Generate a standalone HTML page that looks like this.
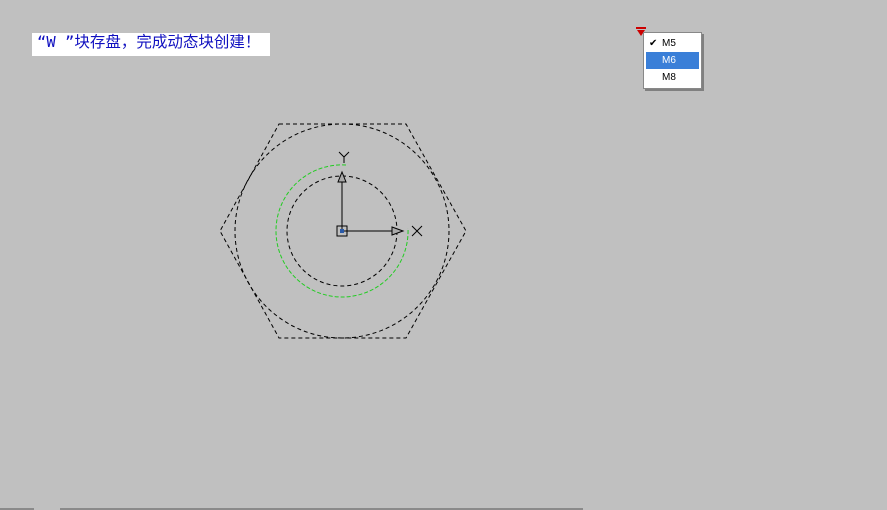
<!DOCTYPE html>
<html><head><meta charset="utf-8"><style>
body{margin:0;width:887px;height:510px;background:#c0c0c0;position:relative;overflow:hidden;font-family:"Liberation Sans","Noto Sans CJK SC",sans-serif}
.msg{position:absolute;left:32px;top:33px;width:238px;height:23px;background:#fff;color:#1010c0;font-size:15.5px;line-height:19px;padding-left:5px;box-sizing:border-box;font-family:"WenQuanYi Zen Hei",monospace}
.menu{position:absolute;left:643px;top:32px;width:57px;height:55px;background:#fff;border:1px solid #888;box-shadow:2px 2px 0 #808080;font-size:10px}
.menu div{height:17px;line-height:17px;padding-left:16px;margin:0 2px;position:relative}
.sel{background:#3a7fd8;color:#fff}
</style></head><body>
<div class="msg">“W ”块存盘，完成动态块创建！</div>
<svg style="position:absolute;left:636px;top:27px" width="12" height="10"><rect x="0" y="0" width="10" height="2" fill="#c00"/><polygon points="1,3 9,3 5,9" fill="#c00"/></svg>
<div class="menu"><div style="margin-top:2px"><span style="position:absolute;left:3px;font-size:10px">✔</span>M5</div><div class="sel">M6</div><div>M8</div></div>
<svg style="position:absolute;left:0;top:0" width="887" height="510">
<g fill="none" stroke="#000" stroke-width="1" stroke-dasharray="4,3">
<polygon points="279,124 406,124 466,231 406,338 279,338 220,231"/>
<circle cx="342" cy="231" r="107"/>
<circle cx="342" cy="231" r="55"/>
</g>
<path d="M346,165 A66,66 0 0 0 276,231 A66,66 0 0 0 342,297 A66,66 0 0 0 408,228" fill="none" stroke="#22cc22" stroke-dasharray="4,2"/>
<line x1="342" y1="231" x2="342" y2="182" stroke="#000"/>
<polygon points="342,172 338,182 346,182" fill="#aaa" stroke="#000"/>
<line x1="342" y1="231" x2="392" y2="231" stroke="#000"/>
<polygon points="403,231 392,227 392,235" fill="#aaa" stroke="#000"/>
<rect x="337" y="226" width="10" height="10" fill="none" stroke="#000"/>
<rect x="340" y="229" width="4" height="4" fill="#2a5aa8"/>
<path d="M339,152 L344,157 L349,152 M344,157 L344,163" stroke="#000" fill="none"/>
<path d="M412,226 L422,236 M422,226 L412,236" stroke="#000" fill="none"/>
<line x1="0" y1="509" x2="34" y2="509" stroke="#555"/>
<line x1="60" y1="509" x2="583" y2="509" stroke="#555"/>
</svg>
</body></html>
